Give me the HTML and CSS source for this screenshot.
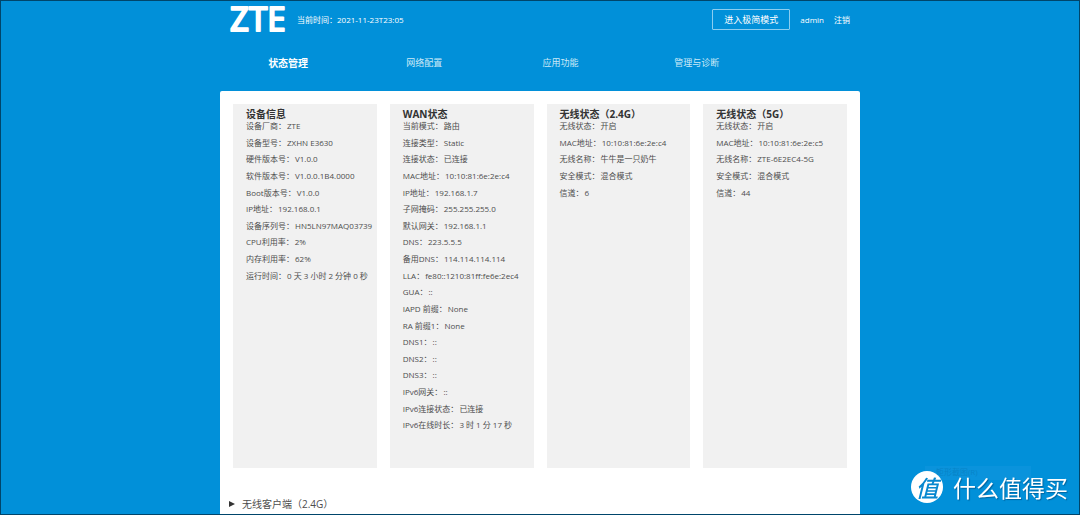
FILE: index.html
```html
<!DOCTYPE html>
<html lang="zh-CN">
<head>
<meta charset="utf-8">
<meta name="viewport" content="width=device-width, initial-scale=1">
<title>ZTE 状态管理</title>
<link rel="stylesheet" href="styles.css">
</head>
<body>
<div class="page">
  <header class="header">
    <svg class="logo" viewBox="0 0 56 36" role="img" aria-label="ZTE"><text class="logo-text" x="0" y="29">ZTE</text></svg>
    <p class="clock">当前时间：2021-11-23T23:05</p>
    <button class="mode-button" type="button">进入极简模式</button>
    <a class="user-link" href="#">admin</a>
    <a class="user-link" href="#">注销</a>
  </header>
  <nav class="nav">
    <a class="nav-link nav-link-active" href="#">状态管理</a>
    <a class="nav-link" href="#">网络配置</a>
    <a class="nav-link" href="#">应用功能</a>
    <a class="nav-link" href="#">管理与诊断</a>
  </nav>
  <main class="panel">
    <div class="cards">
      <section class="card">
        <h2 class="card-title">设备信息</h2>
        <dl class="rows">
          <div class="row"><dt>设备厂商：</dt><dd>ZTE</dd></div>
          <div class="row"><dt>设备型号：</dt><dd>ZXHN E3630</dd></div>
          <div class="row"><dt>硬件版本号：</dt><dd>V1.0.0</dd></div>
          <div class="row"><dt>软件版本号：</dt><dd>V1.0.0.1B4.0000</dd></div>
          <div class="row"><dt>Boot版本号：</dt><dd>V1.0.0</dd></div>
          <div class="row"><dt>IP地址：</dt><dd>192.168.0.1</dd></div>
          <div class="row"><dt>设备序列号：</dt><dd>HN5LN97MAQ03739</dd></div>
          <div class="row"><dt>CPU利用率：</dt><dd>2%</dd></div>
          <div class="row"><dt>内存利用率：</dt><dd>62%</dd></div>
          <div class="row"><dt>运行时间：</dt><dd>0 天 3 小时 2 分钟 0 秒</dd></div>
        </dl>
      </section>
      <section class="card">
        <h2 class="card-title">WAN状态</h2>
        <dl class="rows">
          <div class="row"><dt>当前模式：</dt><dd>路由</dd></div>
          <div class="row"><dt>连接类型：</dt><dd>Static</dd></div>
          <div class="row"><dt>连接状态：</dt><dd>已连接</dd></div>
          <div class="row"><dt>MAC地址：</dt><dd>10:10:81:6e:2e:c4</dd></div>
          <div class="row"><dt>IP地址：</dt><dd>192.168.1.7</dd></div>
          <div class="row"><dt>子网掩码：</dt><dd>255.255.255.0</dd></div>
          <div class="row"><dt>默认网关：</dt><dd>192.168.1.1</dd></div>
          <div class="row"><dt>DNS：</dt><dd>223.5.5.5</dd></div>
          <div class="row"><dt>备用DNS：</dt><dd>114.114.114.114</dd></div>
          <div class="row"><dt>LLA：</dt><dd>fe80::1210:81ff:fe6e:2ec4</dd></div>
          <div class="row"><dt>GUA：</dt><dd>::</dd></div>
          <div class="row"><dt>IAPD 前缀：</dt><dd>None</dd></div>
          <div class="row"><dt>RA 前缀1：</dt><dd>None</dd></div>
          <div class="row"><dt>DNS1：</dt><dd>::</dd></div>
          <div class="row"><dt>DNS2：</dt><dd>::</dd></div>
          <div class="row"><dt>DNS3：</dt><dd>::</dd></div>
          <div class="row"><dt>IPv6网关：</dt><dd>::</dd></div>
          <div class="row"><dt>IPv6连接状态：</dt><dd>已连接</dd></div>
          <div class="row"><dt>IPv6在线时长：</dt><dd>3 时 1 分 17 秒</dd></div>
        </dl>
      </section>
      <section class="card">
        <h2 class="card-title">无线状态（2.4G）</h2>
        <dl class="rows">
          <div class="row"><dt>无线状态：</dt><dd>开启</dd></div>
          <div class="row"><dt>MAC地址：</dt><dd>10:10:81:6e:2e:c4</dd></div>
          <div class="row"><dt>无线名称：</dt><dd>牛牛是一只奶牛</dd></div>
          <div class="row"><dt>安全模式：</dt><dd>混合模式</dd></div>
          <div class="row"><dt>信道：</dt><dd>6</dd></div>
        </dl>
      </section>
      <section class="card">
        <h2 class="card-title">无线状态（5G）</h2>
        <dl class="rows">
          <div class="row"><dt>无线状态：</dt><dd>开启</dd></div>
          <div class="row"><dt>MAC地址：</dt><dd>10:10:81:6e:2e:c5</dd></div>
          <div class="row"><dt>无线名称：</dt><dd>ZTE-6E2EC4-5G</dd></div>
          <div class="row"><dt>安全模式：</dt><dd>混合模式</dd></div>
          <div class="row"><dt>信道：</dt><dd>44</dd></div>
        </dl>
      </section>
    </div>
    <button class="clients" type="button" aria-expanded="false">
      <svg class="clients-arrow" viewBox="0 0 6 6" aria-hidden="true"><path d="M0 0L6 3L0 6Z"/></svg>
      <span>无线客户端（2.4G）</span>
    </button>
  </main>
</div>
<div class="menu-ghost">矩形截图(R)</div>
<div class="watermark">
  <span class="watermark-badge"><span class="watermark-mark">值</span></span>
  <span class="watermark-text">什么值得买</span>
</div>
</body>
</html>
```
FILE: styles.css
```css
* {
  box-sizing: border-box;
}

body {
  margin: 0;
  min-height: 100vh;
  display: flex;
  justify-content: center;
  border: 1px solid #00456b;
  background: #0190d9;
  color: #4d4d4d;
  font-family: "Open Sans", "Noto Sans CJK SC", sans-serif;
  font-size: 8px;
}

a {
  color: inherit;
  text-decoration: none;
}

button {
  font: inherit;
  color: inherit;
  background: none;
  border: 0;
  cursor: pointer;
}

.page {
  width: 100%;
  max-width: 640px;
  display: flex;
  flex-direction: column;
}

.header {
  display: flex;
  align-items: center;
  height: 37px;
  padding: 0 10px;
  color: #fff;
}

.logo {
  width: 56px;
  height: 36px;
  overflow: visible;
}

.logo-text {
  font-family: "Noto Sans", sans-serif;
  font-size: 33px;
  font-weight: 400;
  fill: #fff;
  stroke: #fff;
  stroke-width: 2px;
  stroke-linejoin: round;
}

.clock {
  margin: 0 auto 0 11px;
}

.mode-button {
  height: 21px;
  padding: 0 11px;
  border: 1px solid #8bcdf0;
  border-radius: 1px;
  font-size: 9px;
  line-height: 18px;
}

.user-link {
  margin-left: 10px;
}

.nav {
  display: grid;
  grid-template-columns: repeat(4, 1fr);
  height: 53px;
  padding-right: 95px;
  color: #cce9f7;
  font-size: 9px;
  line-height: 50px;
  text-align: center;
}

.nav-link-active {
  color: #fff;
  font-size: 10px;
  font-weight: 700;
}

.panel {
  flex: 1;
  padding: 13px 13px 2px;
  border-radius: 2px 2px 0 0;
  background: #fff;
}

.cards {
  display: grid;
  grid-template-columns: repeat(4, 1fr);
  gap: 13px;
}

.card {
  min-height: 364px;
  padding: 2px 0 0 13px;
  background: #f1f1f1;
}

.card-title {
  margin: 0;
  color: #333;
  font-size: 10px;
  font-weight: 700;
  line-height: 16px;
}

/* Every card shares the same nineteen-row rhythm. */
.rows {
  display: grid;
  grid-template-rows: repeat(19, 1fr);
  height: 316px;
  margin: 0;
  line-height: 8px;
}

.row {
  display: flex;
  gap: 1px;
  white-space: nowrap;
}

.row dd {
  margin: 0;
}

.clients {
  display: flex;
  align-items: center;
  gap: 7px;
  margin-top: 28px;
  margin-left: -4px;
  padding: 0;
  font-size: 10px;
  line-height: 16px;
}

.clients-arrow {
  width: 6px;
  height: 6px;
  fill: #333;
}

.menu-ghost {
  position: fixed;
  right: 49px;
  bottom: 35px;
  width: 106px;
  padding: 2px 0 4px 11px;
  background: #0a93dc;
  color: #0784c8;
  font-size: 8px;
  line-height: 8px;
}

.watermark {
  position: fixed;
  right: 12px;
  bottom: 12px;
  display: flex;
  align-items: center;
  gap: 10px;
  color: #fff;
  font-family: "Noto Sans CJK SC", sans-serif;
  text-shadow: 1px 1px 1px #0065a0;
}

.watermark-badge {
  display: flex;
  align-items: center;
  justify-content: center;
  width: 32px;
  height: 32px;
  border-radius: 50%;
  background: #fff;
}

.watermark-mark {
  color: #0788cf;
  font-size: 23px;
  font-style: italic;
  font-weight: 500;
  line-height: 24px;
  text-shadow: none;
}

.watermark-text {
  font-size: 23px;
  line-height: 24px;
}
```
